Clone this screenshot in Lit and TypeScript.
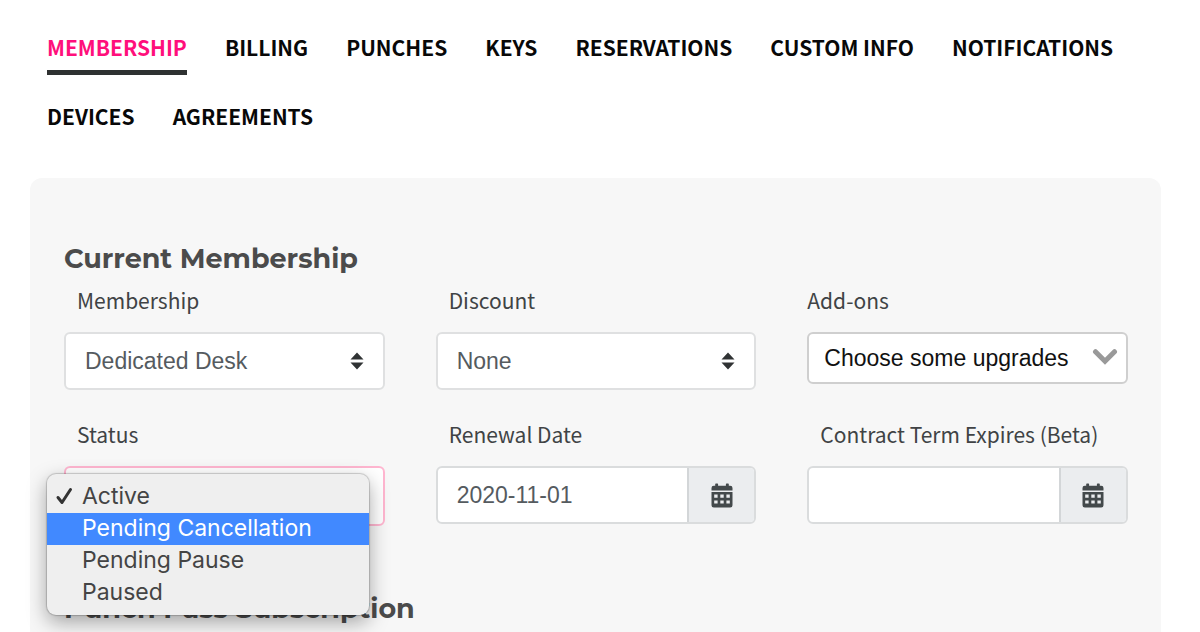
import { LitElement, html, css, svg, nothing } from "lit";
import { customElement, property, state } from "lit/decorators.js";

const tabs = [
  "Membership",
  "Billing",
  "Punches",
  "Keys",
  "Reservations",
  "Custom Info",
  "Notifications",
  "Devices",
  "Agreements",
];

const statuses = ["Active", "Pending Cancellation", "Pending Pause", "Paused"];

const calendarIcon = svg`
  <svg viewBox="0 0 22 25" width="22" height="25" aria-hidden="true">
    <path fill="#43494b" fill-rule="evenodd" d="M4.2 1.2Q4.2.5 4.9.5H6.4Q7.1.5 7.1 1.2V2.8H14.9V1.2Q14.9.5 15.6.5H17.1Q17.8.5 17.8 1.2V2.8H19.2Q21.5 2.8 21.5 5.1V7.4H.5V5.1Q.5 2.8 2.8 2.8H4.2ZM.5 9H21.5V22.2Q21.5 24.5 19.2 24.5H2.8Q.5 24.5.5 22.2ZM3.2 11.6V14.8H6.6V11.6ZM9.3 11.6V14.8H12.7V11.6ZM15.4 11.6V14.8H18.8V11.6ZM3.2 17.4V20.6H6.6V17.4ZM9.3 17.4V20.6H12.7V17.4ZM15.4 17.4V20.6H18.8V17.4Z"/>
  </svg>`;

@customElement("date-field")
class DateField extends LitElement {
  @property() label = "";
  @property() value = "";

  static styles = css`
    :host {
      display: block;
    }
    .label {
      display: block;
      padding-left: 13px;
      margin-bottom: 17px;
      line-height: 30px;
    }
    .group {
      display: flex;
      height: 58px;
      box-sizing: border-box;
      border: 2px solid #dadcdd;
      border-radius: 6px;
      overflow: hidden;
      background: #fff;
    }
    .input {
      flex: 1;
      min-width: 0;
      border: 0;
      padding: 0 19px;
      background: none;
      color: #555b5f;
      font: 23px "Liberation Sans", Arial, sans-serif;
    }
    .button {
      display: grid;
      place-items: center;
      width: 67px;
      padding: 0;
      border: 0;
      border-left: 2px solid #d3d6d8;
      background: #ebedef;
    }
  `;

  render() {
    return html`
      <label class="label" for="date">${this.label}</label>
      <div class="group">
        <input class="input" id="date" type="text" .value=${this.value} />
        <button class="button" type="button" aria-label="Open calendar">${calendarIcon}</button>
      </div>
    `;
  }
}

@customElement("select-field")
class SelectField extends LitElement {
  @property() label = "";
  @property({ attribute: false }) options: string[] = [];
  @property() variant: "default" | "compact" | "focused" = "default";

  static styles = css`
    :host {
      display: block;
    }
    .label {
      display: block;
      padding-left: 13px;
      margin-bottom: 17px;
      line-height: 30px;
    }
    .control {
      display: grid;
      align-items: center;
    }
    .select,
    .icon {
      grid-area: 1 / 1;
    }
    .select {
      appearance: none;
      width: 100%;
      height: 58px;
      padding: 0 50px 0 19px;
      border: 2px solid #dfe0e1;
      border-radius: 6px;
      background: #fff;
      color: #555b5f;
      font: 23px "Liberation Sans", Arial, sans-serif;
    }
    .icon {
      justify-self: end;
      margin-right: 21px;
      pointer-events: none;
    }
    .compact .label {
      padding-left: 0;
    }
    .compact .select {
      height: 52px;
      padding: 0 50px 0 15px;
      border-color: #cfcfcf;
      color: #111;
    }
    .compact .icon {
      margin: 0 10px 2px 0;
    }
    .focused .select {
      height: 60px;
      border-color: #ffb6d0;
    }
  `;

  render() {
    const icon =
      this.variant === "compact"
        ? html`<svg class="icon" viewBox="0 0 26 18" width="26" height="18" aria-hidden="true">
            <path d="M3.5 3.7 13 13.2 22.5 3.7" fill="none" stroke="#999" stroke-width="5" stroke-linecap="round" />
          </svg>`
        : html`<svg class="icon" viewBox="0 0 14 18" width="14" height="18" aria-hidden="true">
            <path d="M7 .5 13.5 7.5H.5ZM7 17.5.5 10.5h13Z" fill="#303334" />
          </svg>`;
    return html`
      <div class=${this.variant}>
        <label class="label" for="select">${this.label}</label>
        <div class="control">
          <select class="select" id="select">
            ${this.options.map((o) => html`<option>${o}</option>`)}
          </select>
          ${icon}
        </div>
      </div>
    `;
  }
}

@customElement("app-root")
class AppRoot extends LitElement {
  @state() private highlighted = "Pending Cancellation";

  static styles = css`
    :host {
      display: flex;
      flex-direction: column;
      min-height: 100vh;
      box-sizing: border-box;
      background: #fff;
      color: #404345;
      font: 21px "Noto Sans CJK JP", "Noto Sans", sans-serif;
    }
    .tabs {
      display: flex;
      flex-wrap: wrap;
      gap: 26px 38px;
      padding: 32px 47px 0;
      margin-bottom: 34px;
    }
    .tab {
      padding-bottom: 8px;
      border-bottom: 5px solid transparent;
      color: #080808;
      font-weight: 700;
      line-height: 30px;
      text-decoration: none;
      text-transform: uppercase;
    }
    .tab.active {
      color: #ff0f7b;
      border-bottom-color: #2e3131;
    }
    .panel {
      flex: 1;
      margin: 0 39px 0 30px;
      padding: 63px 33px 4px 34px;
      border-radius: 12px 12px 0 0;
      background: #f7f7f7;
    }
    .title {
      margin: 0;
      color: #4b4b4b;
      font: 700 27px/36px Montserrat, Inter, sans-serif;
    }
    .fields {
      display: grid;
      grid-template-columns: repeat(3, minmax(0, 1fr));
      gap: 29px 51px;
      align-items: start;
      margin: 8px 0 65px;
    }
    .status {
      position: relative;
    }
    .menu {
      position: absolute;
      top: 55px;
      left: -17px;
      right: 16px;
      z-index: 1;
      margin: 0;
      padding: 7px 0 6px;
      border-radius: 9px;
      background: #efefef;
      box-shadow: 0 0 1px 1px rgba(0, 0, 0, 0.18), 0 7px 20px rgba(0, 0, 0, 0.35);
    }
    .option {
      display: grid;
      grid-template-columns: 20px 1fr;
      gap: 7px;
      align-items: center;
      width: 100%;
      padding: 0 8px 2px;
      border: 0;
      background: none;
      color: #444;
      font: 23px/30px Inter, sans-serif;
      text-align: left;
    }
    .option.highlighted {
      background: #4189ff;
      color: #fff;
    }
    .name {
      grid-column: 2;
    }
  `;

  render() {
    return html`
      <nav class="tabs">
        ${tabs.map(
          (t, i) => html`<a class="tab ${i === 0 ? "active" : ""}" href="#" aria-current=${i === 0 ? "page" : nothing}>${t}</a>`,
        )}
      </nav>
      <main class="panel">
        <h2 class="title">Current Membership</h2>
        <div class="fields">
          <select-field label="Membership" .options=${["Dedicated Desk"]}></select-field>
          <select-field label="Discount" .options=${["None"]}></select-field>
          <select-field label="Add-ons" variant="compact" .options=${["Choose some upgrades"]}></select-field>
          <div class="status">
            <select-field label="Status" variant="focused" .options=${statuses}></select-field>
            <div class="menu" role="listbox" aria-label="Status">
              ${statuses.map(
                (s, i) => html`
                  <button
                    class="option ${s === this.highlighted ? "highlighted" : ""}"
                    type="button"
                    role="option"
                    aria-selected=${i === 0}
                    @mouseenter=${() => (this.highlighted = s)}
                  >
                    ${i === 0
                      ? html`<svg viewBox="0 0 20 20" width="20" height="20" aria-hidden="true">
                          <path d="M3 11.5 7 16.5 15.5 3.5" fill="none" stroke="#333" stroke-width="3" stroke-linecap="round" stroke-linejoin="round" />
                        </svg>`
                      : nothing}
                    <span class="name">${s}</span>
                  </button>
                `,
              )}
            </div>
          </div>
          <date-field label="Renewal Date" value="2020-11-01"></date-field>
          <date-field label="Contract Term Expires (Beta)"></date-field>
        </div>
        <h2 class="title">Punch Pass Subscription</h2>
      </main>
    `;
  }
}
